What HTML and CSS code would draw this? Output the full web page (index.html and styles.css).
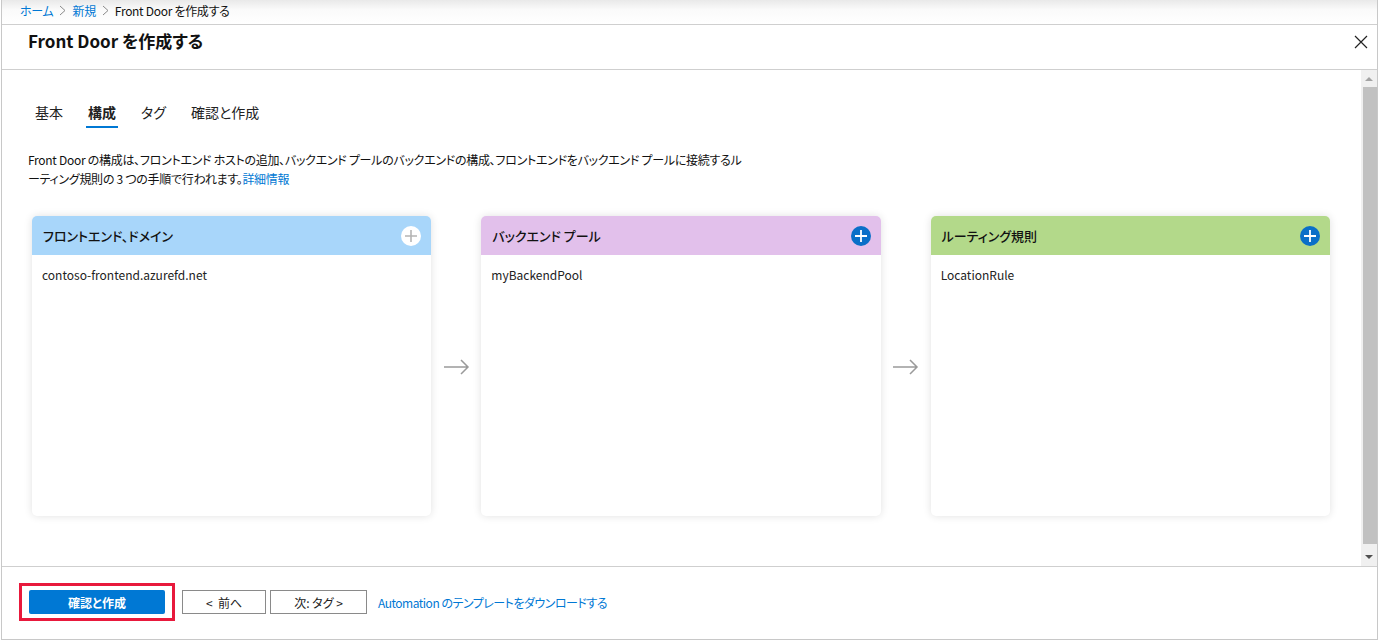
FILE: index.html
```html
<!DOCTYPE html>
<html lang="ja">
<head>
<meta charset="utf-8">
<title>Front Door を作成する</title>
<link rel="stylesheet" href="styles.css">
</head>
<body>
<div class="frame">
  <nav class="crumbs">
    <a class="crumb-link">ホーム</a>
    <svg class="crumb-sep" width="7" height="11" viewBox="0 0 7 11"><path d="M1 1L6 5.5L1 10" stroke="#8a8a8a" stroke-width="1" fill="none"/></svg>
    <a class="crumb-link">新規</a>
    <svg class="crumb-sep" width="7" height="11" viewBox="0 0 7 11"><path d="M1 1L6 5.5L1 10" stroke="#8a8a8a" stroke-width="1" fill="none"/></svg>
    <span class="crumb-current">Front Door を作成する</span>
  </nav>
  <header class="head">
    <h1 class="title">Front Door を作成する</h1>
    <svg class="close" width="14" height="14" viewBox="0 0 14 14"><path d="M1 1L13 13M13 1L1 13" stroke="#222" stroke-width="1.2" fill="none"/></svg>
  </header>
  <main class="body">
    <div class="content">
      <div class="tabs">
        <span class="tab">基本</span>
        <span class="tab active">構成</span>
        <span class="tab">タグ</span>
        <span class="tab">確認と作成</span>
      </div>
      <p class="desc">Front Door の構成は、フロントエンド ホストの追加、バックエンド プールのバックエンドの構成、フロントエンドをバックエンド プールに接続するル<br>ーティング規則の 3 つの手順で行われます。<a class="link">詳細情報</a></p>
      <div class="cards">
        <section class="card">
          <div class="card-head blue">
            <span class="card-title">フロントエンド、ドメイン</span>
            <svg class="plus" width="20" height="20" viewBox="0 0 20 20"><circle cx="10" cy="10" r="10" fill="#fff"/><path d="M10 4V16M4 10H16" stroke="#b4b4b4" stroke-width="1.6"/></svg>
          </div>
          <div class="card-body">contoso-frontend.azurefd.net</div>
        </section>
        <div class="arrow"><svg width="27" height="16" viewBox="0 0 27 16"><path d="M1 8H25M18 1L25 8L18 15" stroke="#9a9a9a" stroke-width="1.5" fill="none"/></svg></div>
        <section class="card">
          <div class="card-head purple">
            <span class="card-title">バックエンド プール</span>
            <svg class="plus" width="20" height="20" viewBox="0 0 20 20"><circle cx="10" cy="10" r="10" fill="#0a6fc8"/><path d="M10 4V16M4 10H16" stroke="#fff" stroke-width="1.8"/></svg>
          </div>
          <div class="card-body">myBackendPool</div>
        </section>
        <div class="arrow"><svg width="27" height="16" viewBox="0 0 27 16"><path d="M1 8H25M18 1L25 8L18 15" stroke="#9a9a9a" stroke-width="1.5" fill="none"/></svg></div>
        <section class="card">
          <div class="card-head green">
            <span class="card-title">ルーティング規則</span>
            <svg class="plus" width="20" height="20" viewBox="0 0 20 20"><circle cx="10" cy="10" r="10" fill="#0a6fc8"/><path d="M10 4V16M4 10H16" stroke="#fff" stroke-width="1.8"/></svg>
          </div>
          <div class="card-body">LocationRule</div>
        </section>
      </div>
    </div>
    <div class="scrollbar">
      <svg class="sb-up" width="16" height="17" viewBox="0 0 16 17"><path d="M4 11L8 7L12 11Z" fill="#a3a3a3"/></svg>
      <div class="sb-track"><div class="sb-thumb"></div></div>
      <svg class="sb-down" width="16" height="18" viewBox="0 0 16 18"><path d="M4 7L12 7L8 11Z" fill="#505050"/></svg>
    </div>
  </main>
  <footer class="foot">
    <div class="primary-wrap"><button class="btn primary">確認と作成</button></div>
    <button class="btn secondary prev">&lt;&nbsp; 前へ</button>
    <button class="btn secondary next">次: タグ &gt;</button>
    <a class="link foot-link">Automation のテンプレートをダウンロードする</a>
  </footer>
</div>
</body>
</html>
```

FILE: styles.css
```css
* { box-sizing: border-box; }
html, body { margin: 0; padding: 0; }
body {
  width: 1378px;
  height: 640px;
  overflow: hidden;
  background: #fff;
  font-family: "Segoe UI", "Noto Sans CJK JP", sans-serif;
  font-feature-settings: "palt";
  color: #000;
}
.frame {
  margin-left: 1px;
  width: 1377px;
  height: 640px;
  border-left: 1px solid #c8c8c8;
  border-right: 1px solid #c8c8c8;
  border-bottom: 1px solid #c8c8c8;
  display: flex;
  flex-direction: column;
}
.crumbs {
  height: 25px;
  border-bottom: 1px solid #cfcfcf;
  background: linear-gradient(#e9e9e9, #fafafa 40%, #fff);
  display: flex;
  align-items: center;
  padding: 0 0 3px 18px;
  font-size: 12px;
  letter-spacing: -0.3px;
  gap: 6px;
}
.crumb-link { color: #0078d4; }
.crumb-sep { display: block; }
.crumb-current { color: #111; }
.head {
  height: 45px;
  border-bottom: 1px solid #cfcfcf;
  display: flex;
  align-items: center;
  justify-content: space-between;
  padding: 0 9px 14px 26px;
}
.title {
  margin: 0;
  font-size: 17px;
  font-weight: 600;
  color: #111;
}
.close { display: block; margin-top: 4px; }
.body {
  height: 497px;
  border-bottom: 1px solid #cfcfcf;
  display: flex;
}
.content {
  flex: 1;
  padding-left: 26px;
  padding-top: 32px;
}
.tabs {
  display: flex;
  gap: 21px;
  margin-left: 5px;
  height: 26px;
}
.tab {
  padding: 0 2px 4px;
  font-size: 14px;
  line-height: 20px;
  color: #222;
  border-bottom: 2px solid transparent;
}
.tab.active {
  font-weight: 600;
  border-bottom-color: #0078d4;
}
.desc {
  margin: 22px 0 0;
  font-size: 12px;
  line-height: 19px;
  letter-spacing: -0.28px;
  color: #111;
}
.link { color: #0078d4; }
.cards {
  margin: 28px 0 0 4px;
  width: 1298px;
  display: grid;
  grid-template-columns: 1fr 50px 1fr 50px 1fr;
  height: 300px;
}
.card {
  background: #fff;
  border-radius: 5px;
  box-shadow: 0 0 8px rgba(0, 0, 0, 0.12);
  overflow: hidden;
}
.card-head {
  height: 39px;
  display: flex;
  align-items: center;
  justify-content: space-between;
  padding: 0 10px 0 11px;
}
.card-head.blue { background: #a8d6fa; }
.card-head.purple { background: #e2c0eb; }
.card-head.green { background: #b3d98a; }
.card-title {
  font-size: 13px;
  font-weight: 500;
  color: #111;
}
.plus { display: block; }
.card-body {
  padding: 12px 10px;
  font-size: 12px;
  line-height: 16px;
  color: #222;
}
.arrow {
  display: flex;
  align-items: center;
  justify-content: center;
  padding-top: 2px;
}
.scrollbar {
  width: 16px;
  background: #f0f0f0;
  display: flex;
  flex-direction: column;
}
.sb-up, .sb-down { display: block; flex: none; }
.sb-track {
  flex: 1;
  padding: 0 0 4px 2px;
}
.sb-thumb {
  height: 100%;
  background: #c1c1c1;
}
.foot {
  flex: 1;
  display: flex;
  align-items: center;
  padding: 0 0 2px 17px;
}
.primary-wrap {
  border: 3px solid #e8193c;
  padding: 4px 7px;
  margin-right: 7px;
}
.btn {
  font-family: inherit;
  font-feature-settings: "palt";
  font-size: 12px;
  height: 24px;
  padding: 0;
  cursor: pointer;
}
.primary {
  width: 136px;
  background: #0078d4;
  color: #fff;
  border: none;
  border-radius: 2px;
  font-weight: 700;
  display: block;
}
.secondary {
  background: #fff;
  border: 1px solid #8a8a8a;
  color: #222;
}
.prev { width: 84px; margin-right: 4px; }
.next { width: 97px; margin-right: 11px; }
.foot-link { font-size: 12px; letter-spacing: -0.5px; }
```
